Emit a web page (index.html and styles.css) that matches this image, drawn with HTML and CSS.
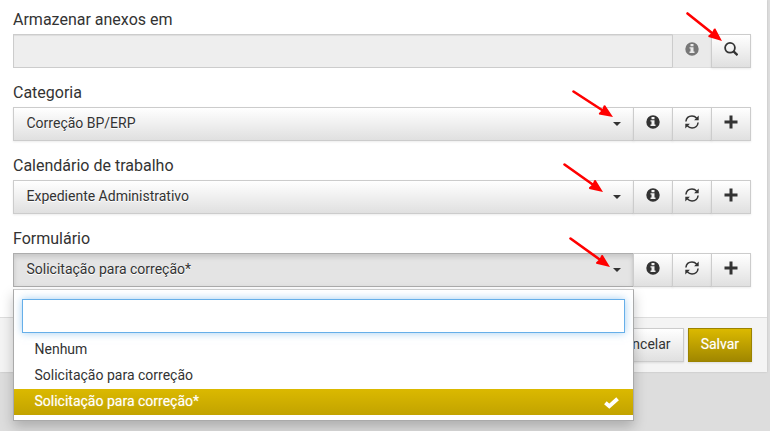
FILE: index.html
```html
<!DOCTYPE html>
<html lang="pt-BR">
<head>
<meta charset="utf-8">
<title>Formulário</title>
<link rel="stylesheet" href="styles.css">
</head>
<body>
<svg class="defs" aria-hidden="true">
  <symbol id="info" viewBox="0 0 14 14"><path fill-rule="evenodd" d="M7 .3a6.700 6.700 0 1 1 0 13.400A6.700 6.700 0 0 1 7 .3zM5.500 2v2.200h3V2zM4.500 5.200v1.300h1v3h-1V11h5V9.500h-1V5.200z"/></symbol>
  <symbol id="refresh" viewBox="0 0 14 14"><path fill="none" stroke="currentColor" stroke-width="1.500" d="M.9 6.500C1.300 3 4 1.100 7 1.100c2 0 3.500.8 4.700 2.200M13.100 7.500C12.700 11 10 12.900 7 12.900c-2 0-3.500-.8-4.700-2.200"/><path d="M13.700.6V5.200H9.100zM.3 13.400V8.800H4.900z"/></symbol>
  <symbol id="plus" viewBox="0 0 14 14"><path d="M5.500 .5h3v5h5v3h-5v5h-3v-5h-5v-3h5z"/></symbol>
  <symbol id="search" viewBox="0 0 14 14"><circle cx="6" cy="5.800" r="4.900" fill="none" stroke="currentColor" stroke-width="1.800"/><path fill="none" stroke="currentColor" stroke-width="2.300" d="M9.300 9.200l4.200 4"/></symbol>
  <symbol id="check" viewBox="0 0 15 12"><path fill="none" stroke="currentColor" stroke-width="3.900" d="M1.400 5.800l3.900 3.400L13.600 1.700"/></symbol>
</svg>
<main class="panel">
  <form class="fields">
    <div class="field">
      <label class="label">Armazenar anexos em</label>
      <div class="group">
        <div class="main readonly"></div>
        <span class="btn addon"><svg class="icon"><use href="#info"/></svg></span>
        <span class="btn"><svg class="icon"><use href="#search"/></svg></span>
      </div>
    </div>
    <div class="field">
      <label class="label">Categoria</label>
      <div class="group">
        <div class="main select"><span>Correção BP/ERP</span><i class="caret"></i></div>
        <span class="btn"><svg class="icon"><use href="#info"/></svg></span>
        <span class="btn"><svg class="icon"><use href="#refresh"/></svg></span>
        <span class="btn"><svg class="icon"><use href="#plus"/></svg></span>
      </div>
    </div>
    <div class="field">
      <label class="label">Calendário de trabalho</label>
      <div class="group">
        <div class="main select"><span>Expediente Administrativo</span><i class="caret"></i></div>
        <span class="btn"><svg class="icon"><use href="#info"/></svg></span>
        <span class="btn"><svg class="icon"><use href="#refresh"/></svg></span>
        <span class="btn"><svg class="icon"><use href="#plus"/></svg></span>
      </div>
    </div>
    <div class="field">
      <label class="label">Formulário</label>
      <div class="group">
        <div class="main select open"><span>Solicitação para correção*</span><i class="caret"></i></div>
        <span class="btn"><svg class="icon"><use href="#info"/></svg></span>
        <span class="btn"><svg class="icon"><use href="#refresh"/></svg></span>
        <span class="btn"><svg class="icon"><use href="#plus"/></svg></span>
        <div class="menu">
          <div class="filter"></div>
          <div class="option">Nenhum</div>
          <div class="option">Solicitação para correção</div>
          <div class="option selected"><span>Solicitação para correção*</span><svg class="check"><use href="#check"/></svg></div>
        </div>
      </div>
    </div>
  </form>
  <footer class="footer">
    <span class="action">Cancelar</span>
    <span class="action primary">Salvar</span>
  </footer>
</main>
<svg class="arrows" viewBox="0 0 770 431">
  <defs><path id="head" d="M0 0L-13-5.500L-14-4.500L-13 0L-14 4.500L-13 5.500z"/></defs>
  <path class="shaft" d="M687.500 13.500L712 33M573.500 91.500L602 110M564.500 164.500L592 184M570.500 238.500L599 259"/>
  <use href="#head" transform="translate(722 41) rotate(39)"/>
  <use href="#head" transform="translate(613 117) rotate(33)"/>
  <use href="#head" transform="translate(603 192) rotate(35.500)"/>
  <use href="#head" transform="translate(610 267) rotate(36)"/>
</svg>
</body>
</html>
```
FILE: styles.css
```css
* { box-sizing: border-box; }
body {
  margin: 0;
  height: 431px;
  overflow: hidden;
  background: #ddd;
  color: #333;
  font: 14px/20px Roboto, "Liberation Sans", sans-serif;
}
.defs { position: absolute; width: 0; height: 0; }
.panel {
  width: 767px;
  height: 372px;
  display: flex;
  flex-direction: column;
  background: #fff;
  box-shadow: 0 0 2px rgba(0, 0, 0, .15);
}
.fields { height: 317px; padding: 8px 16px 0 13px; }
.field { height: 73px; }
.label { display: block; height: 26px; font-size: 16px; line-height: 24px; }
.group { display: flex; position: relative; height: 34px; }
.main {
  flex: 1;
  border: 1px solid #ccc;
}
.readonly { background: #eee; box-shadow: inset 0 1px 1px rgba(0, 0, 0, .075); }
.select {
  display: flex;
  justify-content: space-between;
  align-items: center;
  padding: 0 12px 2px 12.5px;
  background: linear-gradient(#fff, #e0e0e0);
  box-shadow: 0 1px 2px rgba(0, 0, 0, .08);
  text-shadow: 0 1px 0 #fff;
}
.open {
  background: #e4e4e4;
  border-color: #adadad;
  box-shadow: inset 0 3px 5px rgba(0, 0, 0, .125);
}
.caret {
  border: 4px solid transparent;
  border-top-color: #333;
  border-bottom: 0;
  margin-top: 2px;
}
.btn {
  width: 40px;
  margin-left: -1px;
  display: flex;
  justify-content: center;
  padding-top: 7px;
  border: 1px solid #ccc;
  background: linear-gradient(#fff, #e0e0e0);
  box-shadow: 0 1px 2px rgba(0, 0, 0, .08);
}
.addon { background: #eaeaea; border-color: #ddd #ccc #ddd; color: #777; box-shadow: none; }
.icon { width: 14px; height: 14px; fill: currentColor; }
.menu {
  position: absolute;
  z-index: 2;
  top: 36px;
  left: 0;
  width: 621px;
  height: 132px;
  padding: 9px 0 5px;
  border: 1px solid #aaa;
  border-top-color: #ccc;
  background: #fff;
  box-shadow: 0 6px 12px rgba(0, 0, 0, .22);
}
.filter {
  height: 34px;
  margin: 0 8px 4px;
  border: 1px solid #66afe9;
  box-shadow: 0 0 8px rgba(102, 175, 233, .6);
}
.option { height: 26px; padding: 0 14px 0 20.5px; line-height: 25px; }
.selected {
  display: flex;
  justify-content: space-between;
  align-items: flex-start;
  color: #fff;
  background: linear-gradient(#dbb900, #c2a300);
  text-shadow: 0 0 1px rgba(255, 255, 255, .5);
}
.selected span { line-height: 24px; }
.check { width: 15px; height: 12px; margin-top: 8px; }
.footer {
  height: 55px;
  display: flex;
  justify-content: flex-end;
  gap: 4px;
  padding: 10px 15px 0;
  border-top: 1px solid #ddd;
  background: #f4f4f4;
}
.action {
  height: 34px;
  padding: 0 12px;
  line-height: 31px;
  border: 1px solid #ccc;
  background: linear-gradient(#fff, #e0e0e0);
  box-shadow: 0 1px 2px rgba(0, 0, 0, .1);
}
.primary {
  color: #fff;
  border-color: #9b8300;
  background: linear-gradient(#dbb900, #a08700);
  text-shadow: 0 0 1px rgba(255, 255, 255, .5);
}
.arrows { position: absolute; z-index: 3; inset: 0; width: 770px; height: 431px; fill: red; }
.shaft { fill: none; stroke: red; stroke-width: 2.6; stroke-linecap: round; }
```
